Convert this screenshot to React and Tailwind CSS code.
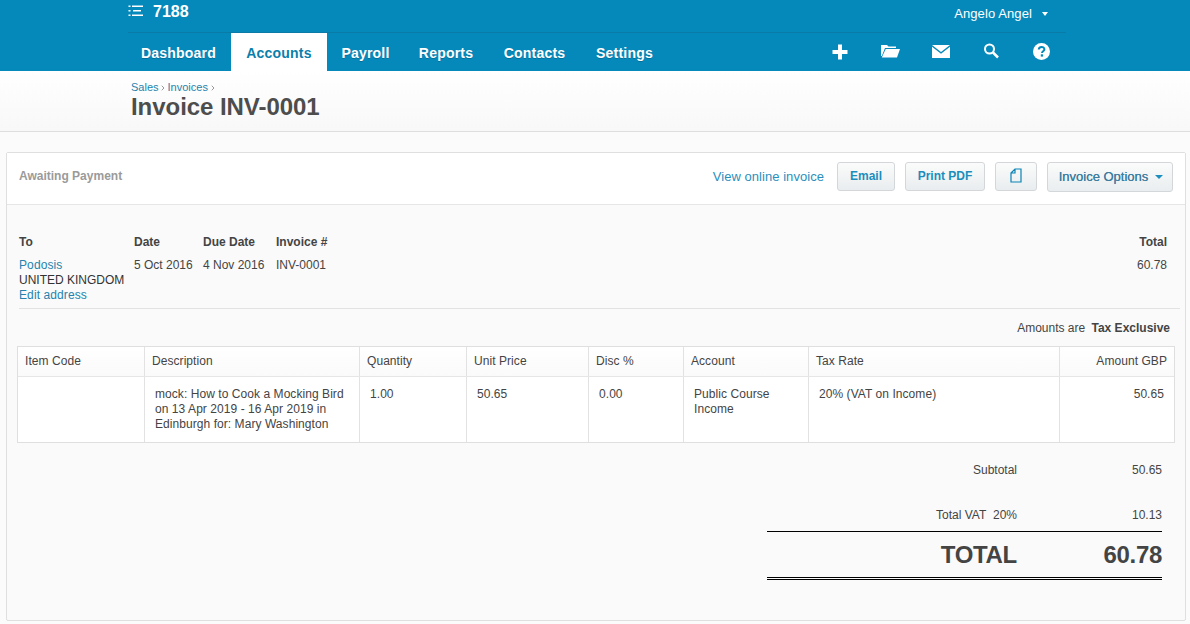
import { ChevronRight } from "lucide-react";

const nav = [
  { label: "Dashboard", cls: "w-[103px] pr-[2px]" },
  { label: "Accounts", cls: "w-[96px] bg-white text-[#0b7fab] [text-shadow:none]" },
  { label: "Payroll", cls: "w-[77px]" },
  { label: "Reports", cls: "w-[84px]" },
  { label: "Contacts", cls: "w-[93px]" },
  { label: "Settings", cls: "w-[87px]" },
];

const columns = [
  { label: "Item Code", w: "w-[127px]" },
  { label: "Description", w: "w-[215px]" },
  { label: "Quantity", w: "w-[107px]" },
  { label: "Unit Price", w: "w-[122px]" },
  { label: "Disc %", w: "w-[95px]" },
  { label: "Account", w: "w-[125px]" },
  { label: "Tax Rate", w: "w-[251px]" },
  { label: "Amount GBP", w: "flex-1 text-right" },
];

function PlusIcon() {
  return (
    <svg width="16" height="16" viewBox="0 0 16 16" fill="#fff">
      <rect x="6" y="0.5" width="4" height="15" />
      <rect x="0.5" y="6" width="15" height="4" />
    </svg>
  );
}

function FolderIcon() {
  return (
    <svg width="20" height="15" viewBox="0 0 20 15" fill="#fff">
      <path d="M1 13V2h6l1.5 1.5H16V5H5L1.8 13z" />
      <path d="M5.7 6H20l-3 8.500H1.800z" />
    </svg>
  );
}

function MailIcon() {
  return (
    <svg width="18" height="13" viewBox="0 0 18 13" fill="#fff">
      <path d="M0 0h18L9 7z" />
      <path d="M0 1.800l9 7 9-7V13H0z" />
    </svg>
  );
}

function SearchIcon() {
  return (
    <svg width="16" height="16" viewBox="0 0 16 16" fill="none" stroke="#fff">
      <circle cx="6.500" cy="6" r="4.500" strokeWidth="2" />
      <path d="M10 9.500l5 5" strokeWidth="2.500" />
    </svg>
  );
}

function HelpIcon() {
  return (
    <svg width="17" height="17" viewBox="0 0 17 17">
      <circle cx="8.500" cy="8.500" r="8.500" fill="#fff" />
      <path d="M5.800 6.500c0-3.400 5.600-3.400 5.600-.2 0 2-2.400 2-2.400 3.700" fill="none" stroke="#0589bb" strokeWidth="2" />
      <rect x="7.800" y="11.300" width="2.300" height="2.300" fill="#0589bb" />
    </svg>
  );
}

function Btn({ children, cls }) {
  return (
    <button className={"h-[29px] rounded-[3px] border border-[#d3d7da] bg-gradient-to-b from-[#fbfbfb] to-[#e9edef] text-[#1b8ebd] flex items-center justify-center " + cls}>
      {children}
    </button>
  );
}

export default function App() {
  return (
    <div className="min-h-[624px] bg-[#fbfbfb] font-['Liberation_Sans',Arial,sans-serif] text-[12px] text-[#444] overflow-hidden">
      {/* top bar */}
      <header className="h-[71px] bg-[#0589bb] text-white">
        <div className="ml-[128px] w-[938px]">
          <div className="h-[33px] border-b border-[#0a7aa6] flex justify-between">
            <div className="flex items-start pt-[3px]">
              <svg width="16" height="12" viewBox="0 0 16 12" fill="#fff" className="mt-[2px]">
                <rect x="0.500" y="0.500" width="2" height="1.500" />
                <rect x="0.500" y="5" width="2" height="1.500" />
                <rect x="0.500" y="9.500" width="2" height="1.500" />
                <rect x="4" y="0.500" width="11" height="1.500" />
                <rect x="5" y="5" width="8" height="1.500" />
                <rect x="4" y="9.500" width="11" height="1.500" />
              </svg>
              <span className="ml-[9px] text-[16px] font-bold leading-[18px]">7188</span>
            </div>
            <div className="flex items-start pt-[6px] pr-[18px]">
              <span className="text-[13px] leading-[15px] tracking-[0.1px]">Angelo Angel</span>
              <span className="ml-[10px] mt-[6px] border-x-[3.500px] border-t-[4px] border-x-transparent border-t-white" />
            </div>
          </div>
          <div className="flex h-[38px]">
            <nav className="flex">
              {nav.map((n) => (
                <a key={n.label} className={"flex items-center justify-center pt-[2px] text-[14px] font-bold tracking-[0.2px] [text-shadow:0_1px_0_rgba(0,0,0,0.2)] " + n.cls}>
                  {n.label}
                </a>
              ))}
            </nav>
            <div className="ml-auto flex items-center pb-[1px]">
              <span className="w-[50px] flex justify-center pr-[2px]"><PlusIcon /></span>
              <span className="w-[50px] flex justify-center pr-[2px] pb-[2px]"><FolderIcon /></span>
              <span className="w-[50px] flex justify-center"><MailIcon /></span>
              <span className="w-[50px] flex justify-center pb-[1px]"><SearchIcon /></span>
              <span className="w-[50px] flex justify-center"><HelpIcon /></span>
            </div>
          </div>
        </div>
      </header>

      {/* title */}
      <div className="h-[61px] border-b border-[#dedede] bg-gradient-to-b from-white to-[#f8f8f8] pl-[131px] pt-[10px]">
        <div className="flex items-center text-[11px] leading-[13px] text-[#1f83ad]">
          Sales
          <ChevronRight size={8} className="mx-[0.5px] text-[#666]" />
          Invoices
          <ChevronRight size={8} className="mx-[1px] text-[#666]" />
        </div>
        <h1 className="text-[24px] font-bold leading-[26px] tracking-[-0.05px] text-[#4d4d4d]">Invoice INV-0001</h1>
      </div>

      {/* panel */}
      <main className="ml-[6px] mr-[4px] mt-[20px] h-[469px] rounded-[2px] border border-[#dfdfdf] bg-[#fafafa]">
        <div className="h-[52px] border-b border-[#e6e6e6] bg-white flex items-center pl-[12px] pr-[12px] pb-[4px]">
          <span className="mb-[2px] font-bold text-[#9a9a9a]">Awaiting Payment</span>
          <a className="ml-auto text-[#2a8fbd] text-[13px] tracking-[0.05px]">View online invoice</a>
          <Btn cls="ml-[13px] w-[58px] pb-[2px] text-[12px] font-bold">Email</Btn>
          <Btn cls="ml-[10px] w-[80px] pb-[2px] text-[12px] font-bold">Print PDF</Btn>
          <Btn cls="ml-[10px] w-[42px] pb-[2px]">
            <svg width="12" height="15" viewBox="0 0 12 15" fill="none" stroke="#0b84b5" strokeWidth="1.200">
              <path d="M1 5l4-4h6v13H1zM5 1v4H1" />
            </svg>
          </Btn>
          <Btn cls="ml-[10px] mt-[1px] w-[126px] h-[30px] pl-[2px] text-[13px] !text-[#3e7ea0] gap-[7px] [text-shadow:0_0_0.6px_#3e7ea0]">
            Invoice Options
            <span className="border-x-[4px] border-t-[4px] border-x-transparent border-t-[#1b8ebd]" />
          </Btn>
        </div>

        {/* details */}
        <div className="mt-[30px] h-[74px] border-b border-[#e2e2e2] flex ml-[12px] mr-[5px]">
          <div className="w-[115px]">
            <div className="font-bold leading-[15px] mb-[8px]">To</div>
            <div className="leading-[15px] tracking-[0.1px] text-[#2483ad]">Podosis</div>
            <div className="leading-[15px] text-[#333]">UNITED KINGDOM</div>
            <div className="leading-[15px] tracking-[0.1px] text-[#2483ad]">Edit address</div>
          </div>
          <div className="w-[69px]">
            <div className="font-bold leading-[15px] mb-[8px]">Date</div>
            <div className="leading-[15px]">5 Oct 2016</div>
          </div>
          <div className="w-[73px]">
            <div className="font-bold leading-[15px] mb-[8px]">Due Date</div>
            <div className="leading-[15px]">4 Nov 2016</div>
          </div>
          <div>
            <div className="font-bold leading-[15px] mb-[8px]">Invoice #</div>
            <div className="leading-[15px]">INV-0001</div>
          </div>
          <div className="ml-auto text-right pr-[13px]">
            <div className="font-bold leading-[15px] mb-[8px]">Total</div>
            <div className="leading-[15px]">60.78</div>
          </div>
        </div>

        <div className="mt-[12px] mr-[15px] text-right leading-[15px]">
          Amounts are <span className="ml-[3px] font-bold">Tax Exclusive</span>
        </div>

        {/* lines */}
        <div className="mx-[10px] mt-[10px] h-[97px] border border-[#dfdfdf] bg-white tracking-[0.06px]">
          <div className="h-[30px] flex border-b border-[#e6e6e6] bg-gradient-to-b from-white to-[#fafafa]">
            {columns.map((c) => (
              <div key={c.label} className={"px-[7px] pt-[7px] leading-[15px] border-r border-[#e2e2e2] last:border-r-0 " + c.w}>
                {c.label}
              </div>
            ))}
          </div>
          <div className="flex h-[65px]">
            <div className="w-[127px] border-r border-[#e2e2e2]" />
            <div className="w-[215px] border-r border-[#e2e2e2] pl-[10px] pr-[2px] pt-[10px] leading-[15px]">
              mock: How to Cook a Mocking Bird on 13 Apr 2019 - 16 Apr 2019 in Edinburgh for: Mary Washington
            </div>
            <div className="w-[107px] border-r border-[#e2e2e2] pl-[10px] pt-[10px] leading-[15px]">1.00</div>
            <div className="w-[122px] border-r border-[#e2e2e2] pl-[10px] pt-[10px] leading-[15px]">50.65</div>
            <div className="w-[95px] border-r border-[#e2e2e2] pl-[10px] pt-[10px] leading-[15px]">0.00</div>
            <div className="w-[125px] border-r border-[#e2e2e2] pl-[10px] pr-[20px] pt-[10px] leading-[15px]">Public Course Income</div>
            <div className="w-[251px] border-r border-[#e2e2e2] pl-[10px] pt-[10px] leading-[15px]">20% (VAT on Income)</div>
            <div className="flex-1 pr-[10px] pt-[10px] text-right leading-[15px]">50.65</div>
          </div>
        </div>

        {/* totals */}
        <div className="ml-auto mr-[23px] mt-[20px] w-[395px]">
          <div className="flex justify-between leading-[15px]">
            <span className="w-[250px] text-right">Subtotal</span>
            <span>50.65</span>
          </div>
          <div className="mt-[30px] flex justify-between leading-[15px]">
            <span className="w-[250px] text-right">Total VAT&nbsp; 20%</span>
            <span>10.13</span>
          </div>
          <div className="mt-[8px] h-[49px] border-t border-t-black border-b-[3px] border-b-black [border-bottom-style:double] flex justify-between items-center font-bold text-[24px] tracking-[-0.3px] text-[#444]">
            <span className="w-[250px] text-right">TOTAL</span>
            <span>60.78</span>
          </div>
        </div>
      </main>
    </div>
  );
}
